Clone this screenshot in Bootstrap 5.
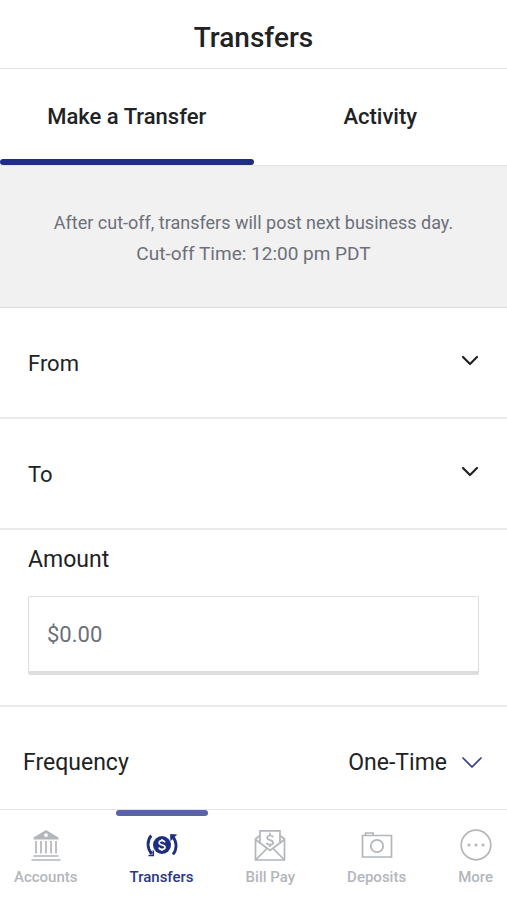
<!DOCTYPE html>
<html lang="en">
<head>
<meta charset="utf-8">
<meta name="viewport" content="width=device-width, initial-scale=1">
<title>Transfers</title>
<link href="https://cdn.jsdelivr.net/npm/bootstrap@5.3.0/dist/css/bootstrap.min.css" rel="stylesheet">
<style>
  :root { --navy: #1f2f80; --ink: #212224; --line: #e4e4e5; --muted: #6d7078; --idle: #b3b6ba; }
  body { font-family: Roboto, "Liberation Sans", sans-serif; color: var(--ink); font-size: 22px; line-height: 32px; }
  .rule { border-bottom: 1px solid var(--line); }
  .rule-2 { border-bottom: 2px solid #eaeaeb; }
  .page-title { font-size: 28px; line-height: 36px; font-weight: 500; padding: 20px 0 12px; }
  .tab-link { font-size: 22px; line-height: 32px; font-weight: 500; color: var(--ink); padding: 32px 0 26px; border: 0; background: none; }
  .tab-link::after { content: ""; display: block; height: 6px; border-radius: 3px; margin-top: 26px; margin-bottom: -26px; }
  .tab-link.active::after { background: var(--navy); }
  .notice { background: #f1f1f2; color: var(--muted); font-size: 19px; line-height: 31px; padding: 41px 24px 38px; border-bottom: 1px solid #dcdcdd; }
  .notice-lead { font-size: 18px; }
  .pick-row { padding: 40px 28px 37px; }
  .pick { appearance: none; border: 0; color: var(--ink); font-size: 22px; line-height: 32px; padding: 0; background: transparent no-repeat; }
  .pick-account { background-image: url("data:image/svg+xml,%3Csvg xmlns='http://www.w3.org/2000/svg' width='18' height='28' fill='none' stroke='%23212224' stroke-width='2.2' stroke-linecap='round' stroke-linejoin='round'%3E%3Cpath d='M2 9l7 7 7-7'/%3E%3C/svg%3E"); background-position: right top; }
  .pick-frequency { font-size: 23px; padding-right: 35px; text-align: right; background-image: url("data:image/svg+xml,%3Csvg xmlns='http://www.w3.org/2000/svg' width='20' height='32' fill='none' stroke='%23323e8c' stroke-width='1.7' stroke-linecap='round' stroke-linejoin='round'%3E%3Cpath d='M1 11l9 9 9-9'/%3E%3C/svg%3E"); background-position: right top; }
  .amount-row { padding: 14px 28px 30px; }
  .field-label { font-size: 23px; }
  .amount-box { color: var(--ink); font-size: 22px; line-height: 32px; padding: 22px 18px 20px; border: 1px solid #dededf; border-bottom: 4px solid #dededf; border-radius: 2px; }
  .amount-box::placeholder { color: var(--muted); opacity: 1; }
  .frequency-row { padding: 40px 25px 30px 23px; }
  .dock { border-top: 1px solid var(--line); }
  .dock-link { color: var(--idle); font-size: 15px; line-height: 20px; font-weight: 500; padding: 0 14px 13px; text-decoration: none; }
  .dock-link::before { content: ""; align-self: stretch; height: 6px; border-radius: 3px; margin: 0 -14px 12px; }
  .dock-link svg { width: 34px; height: 34px; margin-bottom: 5px; fill: none; stroke: currentColor; stroke-width: 1.7; }
  .dock-link.active { color: #2b377f; }
  .dock-link.active::before { background: #5a62ab; }
</style>
<script src="https://cdn.jsdelivr.net/npm/bootstrap@5.3.0/dist/js/bootstrap.bundle.min.js" defer></script>
</head>
<body class="d-flex flex-column min-vh-100 bg-white">
<header class="rule">
  <h1 class="page-title text-center m-0">Transfers</h1>
</header>

<main class="flex-grow-1">
  <div class="d-flex rule" role="tablist">
    <button type="button" class="tab-link active w-50" role="tab" aria-selected="true">Make a Transfer</button>
    <button type="button" class="tab-link w-50" role="tab" aria-selected="false">Activity</button>
  </div>

  <p class="notice text-center m-0"><span class="notice-lead">After cut-off, transfers will post next business day.</span><br>Cut-off Time: 12:00 pm PDT</p>

  <form>
    <div class="pick-row rule-2 d-flex align-items-center">
      <label for="from">From</label>
      <select id="from" class="pick pick-account flex-grow-1"><option value=""></option></select>
    </div>
    <div class="pick-row rule-2 d-flex align-items-center">
      <label for="to">To</label>
      <select id="to" class="pick pick-account flex-grow-1"><option value=""></option></select>
    </div>
    <div class="amount-row rule-2">
      <label for="amount" class="field-label d-block mb-3 pb-1">Amount</label>
      <input id="amount" type="text" inputmode="decimal" class="amount-box w-100 d-block" placeholder="$0.00">
    </div>
    <div class="frequency-row d-flex justify-content-between align-items-center">
      <label for="frequency" class="field-label">Frequency</label>
      <select id="frequency" class="pick pick-frequency"><option>One-Time</option><option>Weekly</option><option>Monthly</option></select>
    </div>
  </form>
</main>

<nav class="dock d-flex justify-content-between" aria-label="Main">
  <a href="#accounts" class="dock-link d-flex flex-column align-items-center">
    <svg viewBox="0 0 34 34" aria-hidden="true">
      <path d="M17 2L29.500 9.500V11.500H4.500V9.500Z M17 5.200a1.900 1.900 0 1 0 0 3.800 1.900 1.900 0 0 0 0-3.800Z" fill="currentColor" fill-rule="evenodd" stroke="none"/>
      <path d="M7 13v12.500M12 13v12.500M17 13v12.500M22 13v12.500M27 13v12.500M4.500 28h25M2.500 32h29"/>
    </svg>Accounts</a>
  <a href="#transfers" class="dock-link active d-flex flex-column align-items-center" aria-current="page">
    <svg viewBox="0 0 34 34" aria-hidden="true">
      <circle cx="17" cy="17" r="9" fill="#1f2f80" stroke="none"/>
      <path d="M20 14.400c-.5-1.200-1.600-1.800-3-1.800-1.700 0-2.900.8-2.900 2.100 0 3 6 1.500 6 4.500 0 1.400-1.300 2.200-3.100 2.200-1.600 0-2.800-.7-3.200-2M17 11v1.600M17 21.400V23" stroke="#fff" stroke-width="1.600"/>
      <path d="M6.200 7.500C1.700 13 2 20.500 6.800 26" stroke="#1f2f80" stroke-width="2.800"/>
      <path d="M28 26.500C32.300 21 32 13.500 27.500 8.500" stroke="#1f2f80" stroke-width="2.800"/>
      <path d="M25.500 6.500l6 .3-5.700 5.700Z" fill="#1f2f80" stroke="#1f2f80" stroke-width=".8"/>
      <path d="M8.300 22.500v5H3.500" stroke="#1f2f80" stroke-width="1.500"/>
    </svg>Transfers</a>
  <a href="#billpay" class="dock-link d-flex flex-column align-items-center">
    <svg viewBox="0 0 34 34" aria-hidden="true">
      <path d="M7 16V2.800h20V16M7 7.500L2.500 11v21h29V11L27 7.500M2.500 11.500L17 22.500l14.500-11M2.500 32L14 20.500M31.500 32L20 20.500"/>
      <path d="M20 9.300c-.4-1.300-1.500-1.800-3-1.800-1.700 0-2.900.8-2.900 2.200 0 3.200 6 1.700 6 4.900 0 1.500-1.300 2.300-3.100 2.300-1.700 0-2.900-.7-3.200-2.100M17 4.800v2.700M17 16.900v2"/>
    </svg>Bill Pay</a>
  <a href="#deposits" class="dock-link d-flex flex-column align-items-center">
    <svg viewBox="0 0 34 34" aria-hidden="true">
      <path d="M2.500 7.500h29v21.500h-29ZM5.500 7V5h7.500v2"/>
      <circle cx="17" cy="18" r="6.200"/>
    </svg>Deposits</a>
  <a href="#more" class="dock-link d-flex flex-column align-items-center">
    <svg viewBox="0 0 34 34" aria-hidden="true">
      <circle cx="17" cy="17" r="14.800"/>
      <path d="M10 17h.01M17 17h.01M24 17h.01" stroke-width="3" stroke-linecap="round"/>
    </svg>More</a>
</nav>
</body>
</html>
